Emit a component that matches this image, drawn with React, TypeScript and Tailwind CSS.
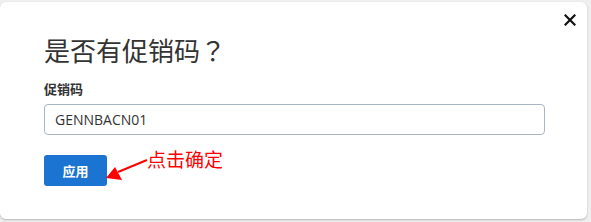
import React from 'react';

const CloseIcon = () => (
  <svg width="12" height="12" viewBox="0 0 12 12" className="block">
    <path d="M1.5 1.5 L10.5 10.5 M10.5 1.5 L1.5 10.5" stroke="#111" strokeWidth="2.2" strokeLinecap="square" />
  </svg>
);

// red annotation arrow pointing at the button
const Arrow = () => (
  <svg width="46" height="28" viewBox="0 0 46 28" className="absolute left-[105px] top-[154px]">
    <path d="M42 4 L13 16" stroke="#f00" strokeWidth="2" />
    <polygon points="1,22 10,11 17,24" fill="#f00" />
  </svg>
);

export default function App() {
  return (
    <div className="w-[591px] h-[222px] bg-[#efefef] pt-[2px] pr-[4px] pb-[3px] font-['Open_Sans','Noto_Sans_CJK_SC',sans-serif]">
      <div className="relative h-full bg-white rounded-[6px] shadow-[0_1px_2px_rgba(0,0,0,0.25)] pl-[44px] pr-[42px]">
        <button className="absolute right-[11px] top-[12px] p-0">
          <CloseIcon />
        </button>

        <h2 className="pt-[31px] text-[26px] leading-[33px] text-[#333] font-['Noto_Sans_CJK_SC',sans-serif] font-normal">
          是否有促销码<span className="font-['Noto_Sans_CJK_TC',sans-serif]">？</span>
        </h2>

        <label className="block mt-[14px] text-[13px] leading-[18px] font-bold text-[#333] font-['Noto_Sans_CJK_SC',sans-serif]">
          促销码
        </label>

        <div className="mt-[6px] h-[31px] border border-[#a7b6c2] rounded-[4px] flex items-center px-[10px] text-[14px] text-[#333]">
          GENNBACN01
        </div>

        <div className="mt-[20px] flex items-start">
          <button className="w-[63px] h-[31px] bg-[#1b74d1] rounded-[3px] text-white text-[13px] font-bold font-['Noto_Sans_CJK_SC',sans-serif]">
            应用
          </button>
          <span className="ml-[40px] -mt-[8px] text-[19px] leading-[24px] text-[#f00] font-['Noto_Sans_CJK_SC',sans-serif]">
            点击确定
          </span>
        </div>

        <Arrow />
      </div>
    </div>
  );
}
